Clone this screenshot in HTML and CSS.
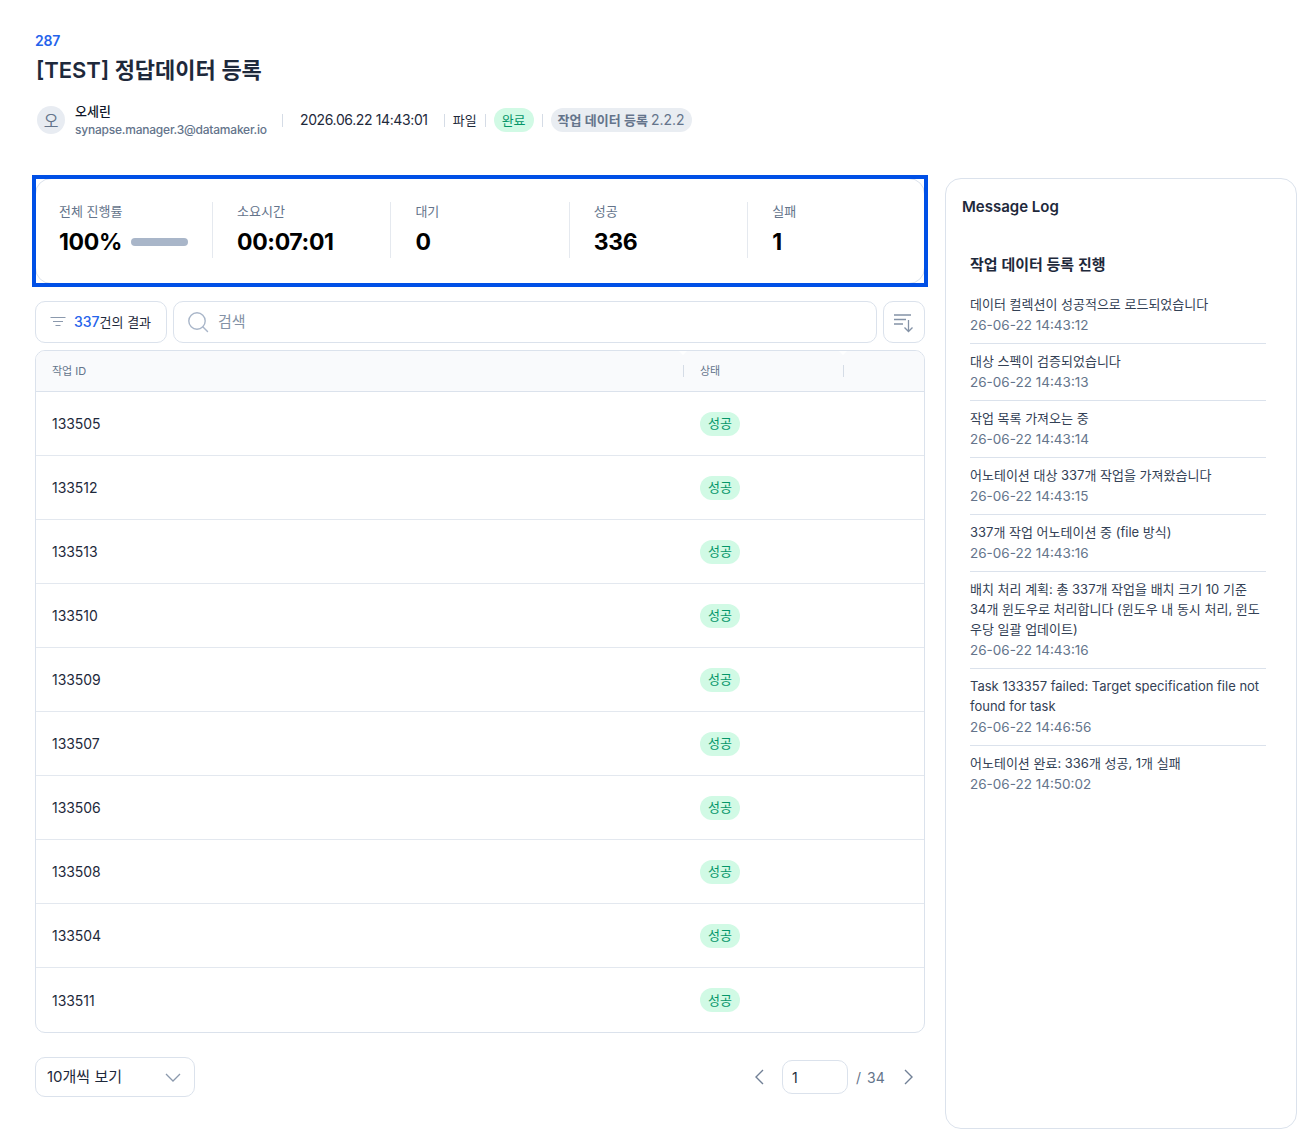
FILE: index.html
```html
<!DOCTYPE html>
<html lang="ko">
<head>
<meta charset="utf-8">
<title>[TEST] 정답데이터 등록</title>
<link rel="stylesheet" href="styles.css">
</head>
<body>
<div class="page">
  <header class="head">
    <div class="job-id">287</div>
    <h1 class="title">[TEST] 정답데이터 등록</h1>
    <div class="meta">
      <div class="avatar">오</div>
      <div class="user">
        <div class="user-name">오세린</div>
        <div class="user-mail">synapse.manager.3@datamaker.io</div>
      </div>
      <span class="sep sep-date"></span>
      <span class="meta-date">2026.06.22 14:43:01</span>
      <span class="sep sep-type"></span>
      <span class="meta-type">파일</span>
      <span class="sep"></span>
      <span class="badge">완료</span>
      <span class="sep"></span>
      <span class="tag"><b class="tag-name">작업 데이터 등록</b> 2.2.2</span>
    </div>
  </header>
  <div class="main">
    <section class="left">
      <div class="stats">
        <div class="stat stat-first">
          <div class="stat-label">전체 진행률</div>
          <div class="stat-row"><span class="stat-value">100%</span><span class="bar"></span></div>
        </div>
        <div class="stat"><div class="stat-label">소요시간</div><div class="stat-row"><span class="stat-value">00:07:01</span></div></div>
        <div class="stat"><div class="stat-label">대기</div><div class="stat-row"><span class="stat-value">0</span></div></div>
        <div class="stat"><div class="stat-label">성공</div><div class="stat-row"><span class="stat-value">336</span></div></div>
        <div class="stat"><div class="stat-label">실패</div><div class="stat-row"><span class="stat-value">1</span></div></div>
      </div>
      <div class="toolbar">
        <div class="result-btn">
          <svg class="icon-filter" width="16" height="12" viewBox="0 0 16 12" fill="none" stroke="#8b99ad" stroke-width="1.2"><path d="M0.5 1.5H15.5M3 5.5H13M5.5 9.5H10.5"/></svg>
          <span class="result-text"><b class="result-num">337</b>건의 결과</span>
        </div>
        <div class="search">
          <svg width="22" height="22" viewBox="0 0 22 22" fill="none" stroke="#a9b6c9" stroke-width="1.4"><circle cx="10" cy="10" r="8.2"/><path d="M16 16L20.5 20.5" stroke-linecap="round"/></svg>
          <span class="search-text">검색</span>
        </div>
        <div class="sort-btn">
          <svg class="icon-sort" width="20" height="19" viewBox="0 0 20 19" fill="none" stroke="#8492a6" stroke-width="1.3"><path d="M0 1H17M0 5.5H12M0 10H9M14.5 6V17.5M10.5 13.5L14.5 17.5L18.5 13.5"/></svg>
        </div>
      </div>
      <div class="table">
        <div class="thead">
          <div class="th th-id">작업 ID</div>
          <div class="th th-status">상태</div>
          <div class="th th-end"></div>
        </div>
        <div class="row"><div class="cell-id">133505</div><div class="cell-status"><span class="badge">성공</span></div></div>
        <div class="row"><div class="cell-id">133512</div><div class="cell-status"><span class="badge">성공</span></div></div>
        <div class="row"><div class="cell-id">133513</div><div class="cell-status"><span class="badge">성공</span></div></div>
        <div class="row"><div class="cell-id">133510</div><div class="cell-status"><span class="badge">성공</span></div></div>
        <div class="row"><div class="cell-id">133509</div><div class="cell-status"><span class="badge">성공</span></div></div>
        <div class="row"><div class="cell-id">133507</div><div class="cell-status"><span class="badge">성공</span></div></div>
        <div class="row"><div class="cell-id">133506</div><div class="cell-status"><span class="badge">성공</span></div></div>
        <div class="row"><div class="cell-id">133508</div><div class="cell-status"><span class="badge">성공</span></div></div>
        <div class="row"><div class="cell-id">133504</div><div class="cell-status"><span class="badge">성공</span></div></div>
        <div class="row row-last"><div class="cell-id">133511</div><div class="cell-status"><span class="badge">성공</span></div></div>
      </div>
      <div class="footer">
        <div class="page-size">
          <span class="page-size-text">10개씩 보기</span>
          <svg width="16" height="9" viewBox="0 0 16 9" fill="none" stroke="#8b99ad" stroke-width="1.3"><path d="M1 1L8 8L15 1"/></svg>
        </div>
        <div class="pager">
          <svg width="10" height="16" viewBox="0 0 10 16" fill="none" stroke="#718096" stroke-width="1.4"><path d="M9 1L2 8L9 15"/></svg>
          <div class="page-input">1</div>
          <span class="page-total"><i class="page-slash">/</i>34</span>
          <svg width="10" height="16" viewBox="0 0 10 16" fill="none" stroke="#718096" stroke-width="1.4"><path d="M1 1L8 8L1 15"/></svg>
        </div>
      </div>
    </section>
    <aside class="log">
      <h2 class="log-title">Message Log</h2>
      <div class="log-body">
        <h3 class="log-head">작업 데이터 등록 진행</h3>
        <div class="log-item"><div class="log-msg">데이터 컬렉션이 성공적으로 로드되었습니다</div><div class="log-time">26-06-22 14:43:12</div></div>
        <div class="log-item"><div class="log-msg">대상 스펙이 검증되었습니다</div><div class="log-time">26-06-22 14:43:13</div></div>
        <div class="log-item"><div class="log-msg">작업 목록 가져오는 중</div><div class="log-time">26-06-22 14:43:14</div></div>
        <div class="log-item"><div class="log-msg">어노테이션 대상 337개 작업을 가져왔습니다</div><div class="log-time">26-06-22 14:43:15</div></div>
        <div class="log-item"><div class="log-msg">337개 작업 어노테이션 중 (file 방식)</div><div class="log-time">26-06-22 14:43:16</div></div>
        <div class="log-item"><div class="log-msg">배치 처리 계획: 총 337개 작업을 배치 크기 10 기준<br>34개 윈도우로 처리합니다 (윈도우 내 동시 처리, 윈도<br>우당 일괄 업데이트)</div><div class="log-time">26-06-22 14:43:16</div></div>
        <div class="log-item"><div class="log-msg">Task 133357 failed: Target specification file not found for task</div><div class="log-time">26-06-22 14:46:56</div></div>
        <div class="log-item log-item-last"><div class="log-msg">어노테이션 완료: 336개 성공, 1개 실패</div><div class="log-time">26-06-22 14:50:02</div></div>
      </div>
    </aside>
  </div>
</div>
</body>
</html>
```
FILE: styles.css
```css
* { box-sizing: border-box; }
html, body { margin: 0; padding: 0; background: #fff; }
body {
  font-family: Inter, "Noto Sans CJK KR", sans-serif;
  color: #1e293b;
  font-size: 14px;
}
.page { width: 1306px; padding: 32px 0 0 35px; }
.head { height: 146px; }
.job-id { color: #2563eb; font-size: 14px; font-weight: 600; line-height: 17px; letter-spacing: -0.25px; }
.title { margin: 5px 0 0; padding-left: 1px; font-size: 22px; font-weight: 600; line-height: 32px; color: #1e293b; }
.meta { display: flex; align-items: center; margin-top: 16px; height: 36px; }
.avatar {
  width: 28px; height: 28px; margin-left: 2px; border-radius: 50%;
  background: #e8ecf2; color: #64748b; font-size: 16px;
  display: flex; align-items: center; justify-content: center;
}
.user { margin: 2px 0 0 10px; width: 207px; }
.user-name { margin: -1px 0 1px; font-size: 13px; font-weight: 500; line-height: 18px; color: #0f172a; }
.user-mail { font-size: 12px; font-weight: 500; line-height: 18px; color: #64748b; white-space: nowrap; letter-spacing: -0.22px; }
.sep { width: 1px; height: 13px; background: #d5dce6; margin: 0 8px; flex: none; }
.sep-date { margin: 0 17px 0 0; }
.sep-type { margin: 0 8px 0 16px; }
.meta-date { font-size: 14px; color: #1e293b; white-space: nowrap; letter-spacing: -0.38px; padding-bottom: 1px; }
.meta-type { font-size: 13px; color: #1e293b; padding-bottom: 2px; }
.badge {
  display: inline-flex; align-items: center; justify-content: center;
  height: 24px; width: 40px; padding-bottom: 2px; border-radius: 12px;
  background: #d1fae5; color: #059669; font-size: 13px; white-space: nowrap;
}
.tag {
  display: inline-flex; align-items: center; height: 24px; padding: 0 7px 1px; gap: 3px;
  border-radius: 12px; background: #e9edf2; color: #64748b; font-size: 14px; white-space: nowrap;
}
.tag-name { font-size: 13px; font-weight: 600; color: #64748b; }
.main { display: grid; grid-template-columns: 890px 352px; column-gap: 20px; align-items: start; }
.left { display: flex; flex-direction: column; }
.stats {
  position: relative;
  display: grid; grid-template-columns: 153px repeat(4, 178.4px);
  height: 106px; padding: 23px 0 0 23px;
  background: #fff; border: 1px solid #dbe2ec; border-radius: 16px;
}
.stats::after {
  content: ""; position: absolute; top: -4px; left: -4px; right: -4px; bottom: -4px;
  border: 4px solid #0050e6; pointer-events: none;
}
.stat { height: 56px; padding-left: 24px; border-left: 1px solid #e5e9ef; }
.stat-first { padding-left: 0; border-left: 0; }
.stat-label { margin-top: -1px; font-size: 13px; line-height: 20px; color: #64748b; }
.stat-row { display: flex; align-items: center; height: 36px; padding-top: 6px; gap: 9px; }
.stat-value { font-size: 23px; font-weight: 700; color: #000; line-height: 36px; letter-spacing: -0.35px; }
.bar { width: 57px; height: 8px; border-radius: 4px; background: #a9b6c9; }
.toolbar { display: flex; gap: 6px; margin-top: 17px; height: 42px; }
.result-btn, .search, .sort-btn { border: 1px solid #dbe2ec; border-radius: 10px; display: flex; align-items: center; background: #fff; }
.result-btn { width: 132px; padding: 0 0 1px 14px; gap: 8px; }
.result-text { font-size: 13px; color: #1e293b; white-space: nowrap; }
.result-num { font-size: 14px; font-weight: 500; color: #2563eb; }
.search { flex: 1; padding: 0 0 0 13px; gap: 9px; }
.search-text { font-size: 15px; color: #8492a6; padding-bottom: 4px; }
.sort-btn { width: 42px; justify-content: center; }
.icon-sort { margin-top: 3px; }
.table { margin-top: 7px; border: 1px solid #dbe2ec; border-radius: 10px; overflow: hidden; }
.thead { display: flex; align-items: center; height: 41px; background: #f9fafc; border-bottom: 1px solid #dbe2ec; font-size: 11px; color: #64748b; }
.th { height: 12px; display: flex; align-items: center; position: relative; padding-bottom: 3px; }
.th-id { width: 647px; padding-left: 16px; }
.th-status { width: 160px; padding-left: 16px; border-left: 1px solid #d5dce6; }
.th-end { border-left: 1px solid #d5dce6; flex: 1; }
.th-status::before, .th-end::before {
  content: ""; position: absolute; top: -14px; left: -5px;
  border-left: 4px solid transparent; border-right: 4px solid transparent; border-top: 4px solid #fff;
}
.row { display: flex; align-items: center; height: 64px; border-bottom: 1px solid #e3e8ef; }
.row-last { border-bottom: 0; }
.cell-id { width: 647px; padding-left: 16px; font-size: 14px; color: #1e293b; letter-spacing: -0.05px; }
.cell-status { padding-left: 17px; display: flex; }
.footer { display: flex; justify-content: space-between; align-items: center; margin-top: 24px; height: 40px; }
.page-size {
  width: 160px; height: 40px; border: 1px solid #dbe2ec; border-radius: 10px;
  display: flex; align-items: center; justify-content: space-between; padding: 0 13px 0 11px;
  font-size: 15px; color: #1e293b;
}
.page-size-text { padding-bottom: 4px; }
.pager { display: flex; align-items: center; padding-right: 11px; }
.page-input {
  width: 66px; height: 34px; margin: 0 8px 0 18px; padding-left: 9px;
  border: 1px solid #dbe2ec; border-radius: 10px;
  display: flex; align-items: center; font-size: 14px; color: #1e293b;
}
.page-total { font-size: 14px; color: #64748b; width: 48px; white-space: nowrap; }
.page-slash { font-style: normal; margin-right: 6px; }
.log { height: 951px; border: 1px solid #dbe2ec; border-radius: 16px; padding: 17px 16px; }
.log-title { margin: 0; font-size: 15px; font-weight: 600; line-height: 21px; color: #1e293b; }
.log-body { margin-top: 36px; padding: 0 14px 0 8px; }
.log-head { margin: 0 0 10px; font-size: 15px; font-weight: 600; line-height: 24px; color: #1e293b; }
.log-item { padding: 8px 0; border-bottom: 1px solid #dbe2ec; }
.log-item-last { border-bottom: 0; }
.log-msg { margin: -1px 0 1px; font-size: 13px; line-height: 20px; color: #334155; }
.log-time { font-size: 13.5px; line-height: 20px; color: #64748b; }
```
